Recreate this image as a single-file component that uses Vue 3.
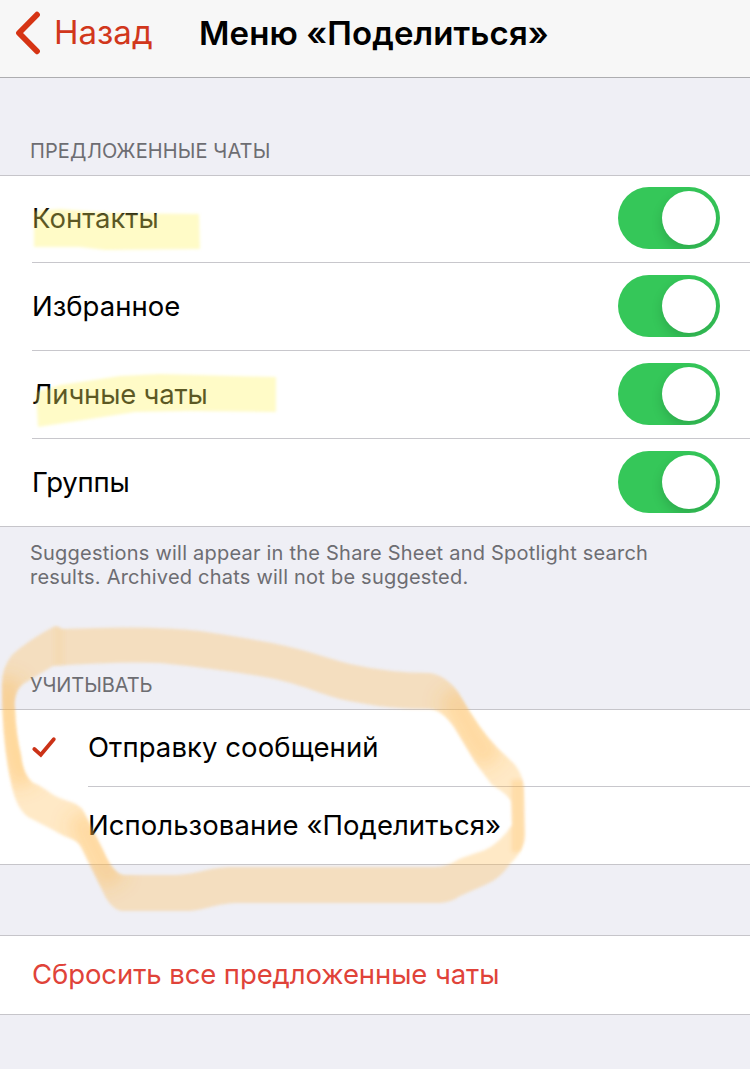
<script setup>
const chats = [
  { name: 'Контакты', cls: 'w1' },
  { name: 'Избранное', cls: 'w2' },
  { name: 'Личные чаты', cls: 'w3' },
  { name: 'Группы', cls: 'w4' },
]
</script>

<template>
  <div class="screen">
    <header class="bar">
      <div class="back">
        <svg class="chevron" width="26" height="44" viewBox="0 0 26 44">
          <path d="M23 3.7 L5 22 L23 40.3" fill="none" stroke="#d63414" stroke-width="5.8" stroke-linecap="round" stroke-linejoin="round" />
        </svg>
        <span class="back-label">Назад</span>
      </div>
      <h1 class="title">Меню «Поделиться»</h1>
    </header>

    <h2 class="caption first"><span>Предложенные чаты</span></h2>
    <section class="group">
      <div v-for="c in chats" :key="c.name" class="row">
        <span class="label" :class="c.cls">{{ c.name }}</span>
        <span class="switch"><span class="knob"></span></span>
      </div>
    </section>
    <p class="note"><span class="n1">Suggestions will appear in the Share Sheet and Spotlight search</span><br><span class="n2">results. Archived chats will not be suggested.</span></p>

    <h2 class="caption second"><span>Учитывать</span></h2>
    <section class="group options">
      <div class="option">
        <svg class="tick" width="26" height="24" viewBox="0 0 26 24">
          <path d="M3.3 13 L9.8 18.8 L22.8 3.2" fill="none" stroke="#cb3217" stroke-width="3.8" stroke-linecap="round" />
        </svg>
        <div class="cell"><span class="label w5">Отправку сообщений</span></div>
      </div>
      <div class="option">
        <div class="cell"><span class="label w6">Использование «Поделиться»</span></div>
      </div>
    </section>

    <section class="group reset">
      <span class="label w7">Сбросить все предложенные чаты</span>
    </section>

    <svg class="marker" width="750" height="1069" viewBox="0 0 750 1069">
      <defs>
        <filter id="soft" filterUnits="userSpaceOnUse" x="0" y="0" width="750" height="1069"><feGaussianBlur stdDeviation="1.7" /></filter>
        <filter id="softer" filterUnits="userSpaceOnUse" x="0" y="0" width="750" height="1069"><feGaussianBlur stdDeviation="9" /></filter>
        <clipPath id="loop"><path clip-rule="evenodd" :d="loop" /></clipPath>
      </defs>
      <g filter="url(#soft)" fill="#fff464" fill-opacity=".36">
        <path d="M34 211 L60 209 L110 213 L199 214 L200 249 L105 250 L80 247 L34 247 Z" />
        <path d="M36 392 L60 385 L120 376 L160 374 L276 377 L276 412 L190 411 L135 412 L90 419 L38 427 Z" />
      </g>
      <path filter="url(#soft)" fill="#ffb84a" fill-opacity=".31" fill-rule="evenodd" :d="loop" />
      <g filter="url(#edge)">
        <g clip-path="url(#loop)" fill="none" stroke="#ffb13b">
          <path filter="url(#softer)" stroke-opacity=".33" stroke-width="26" d="M9 678 Q7 690 9 715 Q13 750 24 785" />
          <path filter="url(#softer)" stroke-opacity=".28" stroke-width="28" d="M79 815 Q96 850 114 884" />
          <path filter="url(#softer)" stroke-opacity=".28" stroke-width="28" d="M450 692 Q462 712 474 737 L492 762" />
          <path filter="url(#soft)" stroke-opacity=".2" stroke-width="13" d="M518 780 V852" />
          <path filter="url(#soft)" stroke-opacity=".08" stroke-width="10" d="M59 627 V666" />
        </g>
      </g>
      <filter id="edge" filterUnits="userSpaceOnUse" x="0" y="0" width="750" height="1069"><feGaussianBlur stdDeviation="1.3" /></filter>
    </svg>
  </div>
</template>

<script>
const outer = 'M2 685 Q2 667 12 655 Q28 640 55 626 Q59 626 62 629 Q150 625 200 631 Q240 637 272 643 C310 651 320 656 350 664 Q390 673 430 673 Q445 675 458 692 L470 712 Q488 741 508 758 Q523 770 524 790 L525 835 Q525 850 510 864 Q500 879 485 885 L460 896 Q452 902 440 903 L240 903 C215 903 205 911 185 911 L122 911 Q113 910 106 898 L82 849 Q79 842 72 839 Q61 835 55 831 L28 817 Q17 809 12 787 Q2 745 2 685 Z'
const inner = 'M15 709 Q13 692 23 684 Q40 674 53 666 Q120 661 160 663 Q220 669 270 678 C310 686 322 697 360 703 Q390 709 430 709 Q442 710 454 727 L475 762 L492 785 Q506 793 511 801 L512 825 Q500 843 485 850 Q470 855 459 859 Q447 867 435 867 L235 867 C205 867 200 875 170 875 L123 875 Q113 873 104 852 L87 818 Q82 805 71 802 Q58 798 52 794 Q38 784 33 783 Q23 775 21 755 Q16 735 15 709 Z'
const loop = outer + ' ' + inner
</script>

<style>
body { margin: 0; background: #efeff5; }
</style>

<style scoped>
.screen { position: relative; width: 750px; height: 1069px; overflow: hidden; background: #efeff5; font-family: Inter, "Liberation Sans", sans-serif; color: #000; }
.bar { box-sizing: border-box; height: 78px; display: flex; background: #f7f7f7; border-bottom: 1px solid #adadb0; }
.back { display: flex; width: 199px; padding: 11px 0 0 14px; box-sizing: border-box; color: #d1371c; }
.chevron { display: block; flex: none; }
.back-label { margin: -1px 0 0 14px; font-size: 33px; line-height: 44px; white-space: nowrap; }
.title { margin: 11px 0 0; font-size: 33px; line-height: 44px; font-weight: 600; letter-spacing: .1px; white-space: nowrap; }
.caption { box-sizing: border-box; margin: 0; padding-left: 30px; font-size: 20px; line-height: 24px; font-weight: 400; color: #6d6d72; text-transform: uppercase; }
.first { height: 97px; padding-top: 61px; letter-spacing: .1px; }
.second { height: 118px; padding-top: 82px; letter-spacing: -.1px; }
.group { background: #fff; border-top: 1px solid #c6c5ca; border-bottom: 1px solid #c6c5ca; }
.row { box-sizing: border-box; height: 88px; margin-left: 32px; padding: 0 30px 2px 0; display: flex; align-items: center; justify-content: space-between; border-bottom: 1px solid #c8c7cc; }
.row:first-child { height: 87px; }
.row:last-child { height: 87px; border: 0; }
.label { font-size: 27.5px; line-height: 36px; white-space: nowrap; }
.w3 { letter-spacing: -.2px; }
.w4 { letter-spacing: -.2px; }
.w5 { letter-spacing: .08px; }
.w6 { letter-spacing: .06px; }
.w7 { letter-spacing: -.09px; }
.switch { box-sizing: border-box; width: 102px; height: 62px; padding: 4px; border-radius: 31px; background: #35c759; display: flex; justify-content: flex-end; overflow: hidden; }
.knob { width: 54px; height: 54px; border-radius: 50%; background: #fff; box-shadow: 0 5px 12px rgba(0, 0, 0, .15); }
.note { margin: 0; height: 64px; padding-left: 30px; box-sizing: border-box; padding-top: 14px; font-size: 20px; line-height: 24px; color: #6d6d72; white-space: nowrap; }
.n1 { letter-spacing: .22px; }
.n2 { letter-spacing: .22px; }
.options { height: 154px; }
.option { display: flex; justify-content: flex-end; height: 77px; align-items: center; }
.tick { margin: -2px 31px 0 31px; flex: none; }
.cell { width: 662px; height: 77px; flex: none; box-sizing: border-box; display: flex; align-items: center; padding-bottom: 2px; border-bottom: 1px solid #c8c7cc; }
.option:last-child .cell { border: 0; }
.reset { margin-top: 70px; height: 76px; padding: 0 0 2px 32px; display: flex; align-items: center; color: #e04339; }
.marker { position: absolute; inset: 0; pointer-events: none; }
</style>
